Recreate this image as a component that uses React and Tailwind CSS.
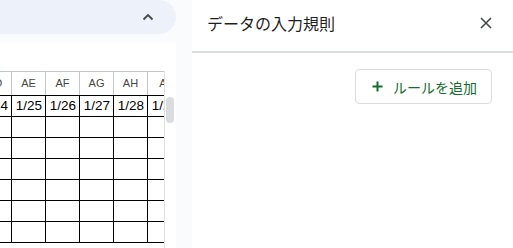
import React from "react";

const cols = ["AD", "AE", "AF", "AG", "AH", "AI"];
const dates = ["1/24", "1/25", "1/26", "1/27", "1/28", "1/29"];
const rows = [0, 1, 2, 3, 4, 5, 6];

export default function App() {
  return (
    <div
      className="flex w-[513px] h-[248px] overflow-hidden bg-[#f9fbfd]"
      style={{ fontFamily: '"Liberation Sans", Arial, "Noto Sans CJK JP", sans-serif' }}
    >
      {/* Left: spreadsheet */}
      <div className="flex flex-col w-[176px] shrink-0">
        <div className="h-[34px] bg-[#edf2fa] rounded-r-[17px] flex items-center justify-end pr-[22px]">
          <svg width="12" height="8" viewBox="0 0 12 8">
            <path d="M1.5 6.5 L6 2 L10.5 6.5" fill="none" stroke="#444746" strokeWidth="1.8" />
          </svg>
        </div>
        <div className="mt-[9px] flex-1 bg-white flex flex-col">
          <div className="h-[28px]" />
          <div className="flex flex-1">
            <div className="w-[164px] overflow-hidden">
              <div className="-ml-[22px] flex flex-col w-max">
                {/* header */}
                <div className="flex h-[25px] border-t border-[#c4c7c5] border-b border-b-black">
                  {cols.map((c) => (
                    <div
                      key={c}
                      className="w-[34px] shrink-0 border-r border-[#c4c7c5] flex items-center justify-center text-[11px] text-[#444746]"
                    >
                      {c}
                    </div>
                  ))}
                </div>
                {rows.map((r) => (
                  <div key={r} className="flex h-[21px] border-b border-black">
                    {cols.map((c, i) => (
                      <div
                        key={c}
                        className="w-[34px] shrink-0 border-r border-black flex items-center justify-end pr-[3px] text-[13.5px] text-black"
                      >
                        {r === 0 ? dates[i] : ""}
                      </div>
                    ))}
                  </div>
                ))}
              </div>
            </div>
            <div className="w-[12px] border-l border-[#e1e3e1] pt-[25px] pl-[1px]">
              <div className="w-[8px] h-[26px] mt-[1px] rounded-full bg-[#dadce0]" />
            </div>
          </div>
        </div>
      </div>

      {/* gap */}
      <div className="w-[16px] shrink-0" />

      {/* Right panel */}
      <div
        className="flex-1 bg-white flex flex-col"
        style={{ fontFamily: '"Noto Sans CJK JP", "Liberation Sans", sans-serif' }}
      >
        <div className="h-[51px] flex items-center justify-between pl-[15px] pr-[21px]">
          <span className="text-[16px] text-[#1f1f1f] leading-none -mt-[6px]">データの入力規則</span>
          <svg width="12" height="12" viewBox="0 0 12 12" className="-mt-[6px]">
            <path d="M1 1 L11 11 M11 1 L1 11" stroke="#444746" strokeWidth="1.6" />
          </svg>
        </div>
        <div className="h-[2px] bg-[#dadce0]" />
        <div className="flex justify-end pr-[21px] pt-[16px]">
          <button className="w-[137px] h-[35px] border border-[#dadce0] rounded-[4px] bg-white flex items-center pl-[16px] gap-[10px] text-[#146c2e] text-[14px]">
            <svg width="11" height="11" viewBox="0 0 11 11">
              <path d="M5.5 0.5 V10.5 M0.5 5.5 H10.5" stroke="#146c2e" strokeWidth="2" />
            </svg>
            <span className="leading-none">ルールを追加</span>
          </button>
        </div>
      </div>
    </div>
  );
}
